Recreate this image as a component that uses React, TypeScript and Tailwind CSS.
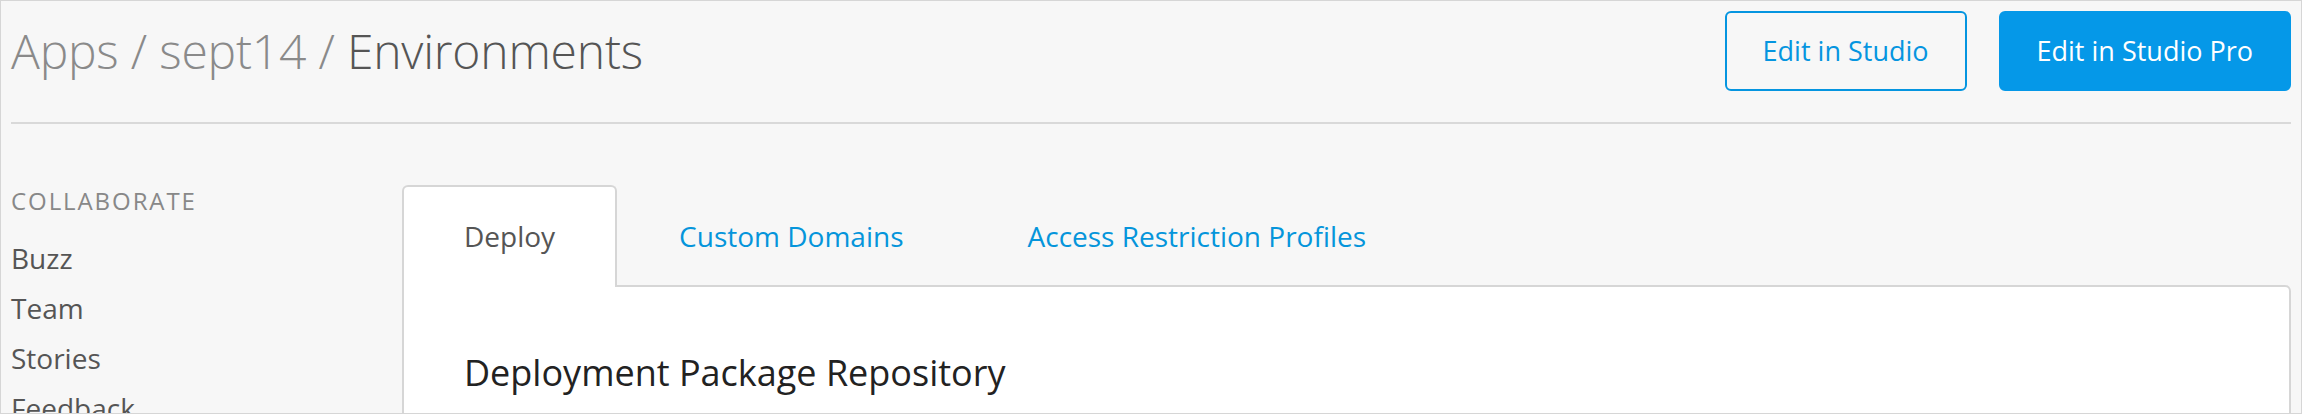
import * as React from "react"

const tabs = ["Deploy", "Custom Domains", "Access Restriction Profiles"]
const navItems = ["Buzz", "Team", "Stories", "Feedback"]

export default function App() {
  return (
    <div className="w-[2302px] h-[414px] overflow-hidden border border-[#d6d6d6] bg-[#f7f7f7] font-['Open_Sans',sans-serif]">
      {/* Header */}
      <div className="px-[10px]">
        <div className="flex items-center justify-between pt-[10px] pb-[31px] border-b-2 border-[#d9d9d9]">
          <h1 className="text-[48px] leading-[58px] font-light tracking-[-0.2px] text-[#8a8a8a]">
            Apps / sept14 / <span className="text-[#555555]">Environments</span>
          </h1>
          <div className="flex items-center gap-[32px]">
            <button className="px-[36px] py-[18px] text-[27px] leading-[40px] text-[#0595e0] border-2 border-[#0595e0] rounded-md bg-transparent">
              Edit in Studio
            </button>
            <button className="px-[36px] py-[18px] text-[27px] leading-[40px] text-white border-2 border-[#0598e8] rounded-md bg-[#0598e8]">
              Edit in Studio Pro
            </button>
          </div>
        </div>
      </div>

      {/* Body */}
      <div className="flex px-[10px]">
        <aside className="w-[391px] shrink-0 pt-[59px]">
          <div className="text-[24px] leading-[36px] tracking-[0.08em] text-[#888888]">COLLABORATE</div>
          <ul className="mt-[14px]">
            {navItems.map((item) => (
              <li key={item} className="text-[28px] leading-[50px] text-[#555555]">
                {item}
              </li>
            ))}
          </ul>
        </aside>

        <main className="flex-1 pt-[61px]">
          <div className="flex">
            {tabs.map((tab, i) =>
              i === 0 ? (
                <div
                  key={tab}
                  className="relative z-10 -mb-[2px] px-[60px] pt-[29px] pb-[31px] text-[28px] leading-[40px] text-[#555555] bg-white border-2 border-b-0 border-[#d6d6d6] rounded-t-md"
                >
                  {tab}
                </div>
              ) : (
                <div
                  key={tab}
                  className="px-[62px] pt-[31px] pb-[29px] text-[28px] leading-[40px] text-[#0595db]"
                >
                  {tab}
                </div>
              )
            )}
          </div>
          <div className="bg-white border-2 border-[#d6d6d6] rounded-tr-md h-[200px] px-[60px] pt-[62px]">
            <h2 className="text-[36px] leading-[48px] text-[#222222]">Deployment Package Repository</h2>
          </div>
        </main>
      </div>
    </div>
  )
}
